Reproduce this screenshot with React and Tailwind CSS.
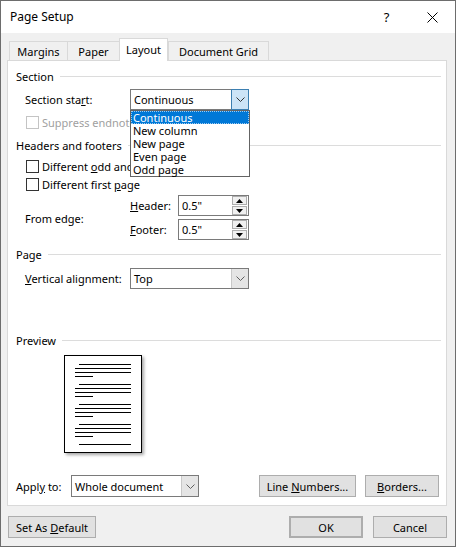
import React from 'react'

function Chevron({ color = '#606060' }) {
  return (
    <svg width="9" height="5" viewBox="0 0 9 5">
      <path d="M0.5 0.5 L4.5 4.5 L8.5 0.5" fill="none" stroke={color} strokeWidth="1" />
    </svg>
  )
}

function Combo({ value, className, open }) {
  return (
    <div className={`flex h-[21px] border border-[#7a7a7a] bg-white ${className}`}>
      <div className="flex-1 flex items-center pl-[3px] whitespace-nowrap">{value}</div>
      {open ? (
        <div className="w-[18px] flex items-center justify-center bg-[#cce4f7] border border-[#3c7fb1] -my-px -mr-px">
          <Chevron color="#333333" />
        </div>
      ) : (
        <div className="w-[17px] flex items-center justify-center bg-[#e5e5e5] border-l border-[#c8c8c8]">
          <Chevron />
        </div>
      )}
    </div>
  )
}

function Spin({ value }) {
  return (
    <div className="flex h-[21px] w-[71px] border border-[#7a7a7a] bg-white">
      <div className="flex-1 flex items-center pl-[3px]">{value}</div>
      <div className="w-[16px] flex flex-col justify-center gap-px pr-px">
        <div className="h-[9px] border border-[#adadad] bg-[#f0f0f0] flex items-center justify-center">
          <svg width="7" height="4" viewBox="0 0 7 4"><path d="M0 4 L3.5 0 L7 4Z" fill="#000" /></svg>
        </div>
        <div className="h-[9px] border border-[#adadad] bg-[#f0f0f0] flex items-center justify-center">
          <svg width="7" height="4" viewBox="0 0 7 4"><path d="M0 0 L3.5 4 L7 0Z" fill="#000" /></svg>
        </div>
      </div>
    </div>
  )
}

function Check({ children, disabled }) {
  return (
    <div className="flex items-center h-[13px] pl-[18px] gap-[3px] whitespace-nowrap">
      <div className={`w-[13px] h-[13px] shrink-0 bg-white border ${disabled ? 'border-[#c4c4c4]' : 'border-[#333333]'}`} />
      <span className={disabled ? 'text-[#a0a0a0]' : ''}>{children}</span>
    </div>
  )
}

function Group({ title, className = '' }) {
  return (
    <div className={`flex items-center h-[16px] pl-[8px] pr-[5px] ${className}`}>
      <span>{title}</span>
      <div className="flex-1 h-px bg-[#dcdcdc] ml-[6px]" />
    </div>
  )
}

function Button({ children, className = '' }) {
  return (
    <div className={`h-[22px] flex items-center justify-center bg-[#e1e1e1] border border-[#adadad] whitespace-nowrap ${className}`}>
      <span>{children}</span>
    </div>
  )
}

function PagePreview() {
  const lines = []
  for (let g = 0; g < 4; g++) {
    const y = 8 + g * 20
    lines.push([14, 66, y], [10, 66, y + 4], [10, 66, y + 8], [10, 28, y + 12])
  }
  lines.push([14, 66, 88])
  return (
    <div className="ml-[56px] w-[78px] h-[98px] border border-black bg-white shadow-[2px_2px_3px_rgba(0,0,0,0.35)]">
      <svg width="76" height="96" viewBox="0 0 76 96" shapeRendering="crispEdges">
        {lines.map(([x1, x2, y], i) => (
          <rect key={i} x={x1} y={y} width={x2 - x1} height="1" fill="#000" />
        ))}
      </svg>
    </div>
  )
}

const tabs = [
  { t: 'Margins', w: 'w-[58px]' },
  { t: 'Paper', w: 'w-[52px]' },
  { t: 'Layout', w: 'w-[49px]', on: true },
  { t: 'Document Grid', w: 'w-[101px]' },
]

export default function App() {
  return (
    <div className="w-[456px] h-[547px] border border-[#6d6d6d] bg-[#f0f0f0] flex flex-col overflow-hidden text-[11px] text-black font-['Noto_Sans','Open_Sans',sans-serif] leading-none">
      {/* title bar */}
      <div className="h-[32px] shrink-0 bg-white flex items-center pl-[9px]">
        <span className="text-[12px]">Page Setup</span>
        <div className="ml-auto w-[45px] h-full flex items-center justify-center text-[13px]">?</div>
        <div className="w-[46px] h-full flex items-center justify-center">
          <svg width="11" height="11" viewBox="0 0 11 11">
            <path d="M0.5 0.5 L10.5 10.5 M10.5 0.5 L0.5 10.5" stroke="#000" strokeWidth="1" />
          </svg>
        </div>
      </div>

      {/* tabs */}
      <div className="h-[28px] shrink-0 flex items-end px-[8px] relative z-10 -mb-px">
        {tabs.map((tab, i) => (
          <div
            key={tab.t}
            className={`${tab.w} flex items-center justify-center border-t border-l border-[#d9d9d9] ${
              tab.on ? 'h-[23px] bg-white border-r pb-[2px]' : 'h-[19px] mb-px'
            } ${i === tabs.length - 1 ? 'border-r' : ''}`}
          >
            {tab.t}
          </div>
        ))}
      </div>

      {/* panel */}
      <div className="ml-[6px] w-[440px] h-[446px] shrink-0 border border-[#d9d9d9] bg-white flex flex-col whitespace-nowrap">
        <Group title="Section" className="mt-[7px]" />

        <div className="relative z-20 mt-[5px] flex items-center h-[21px]">
          <span className="pl-[17px] w-[122px]">Section sta<u>r</u>t:</span>
          <Combo value="Continuous" className="w-[119px]" open />
          <div className="absolute left-[122px] top-[21px] w-[120px] border border-[#646464] bg-white flex flex-col">
            <div className="h-[13px] flex items-center pl-[2px] bg-[#0078d7] text-white outline outline-1 outline-dotted outline-[#9ecbf0] -outline-offset-1">Continuous</div>
            <div className="h-[13px] flex items-center pl-[2px]">New column</div>
            <div className="h-[13px] flex items-center pl-[2px]">New page</div>
            <div className="h-[13px] flex items-center pl-[2px]">Even page</div>
            <div className="h-[13px] flex items-center pl-[2px]">Odd page</div>
          </div>
        </div>

        <div className="mt-[6px]">
          <Check disabled>Suppress endnotes</Check>
        </div>

        <Group title="Headers and footers" className="mt-[8px]" />

        <div className="mt-[7px]">
          <Check>Different <u>o</u>dd and even</Check>
        </div>
        <div className="mt-[5px]">
          <Check>Different first <u>p</u>age</Check>
        </div>

        <div className="mt-[4px] flex items-center">
          <span className="pl-[17px] w-[122px] mt-[2px]">From edge:</span>
          <div className="flex flex-col gap-[3px]">
            <div className="flex items-center">
              <span className="w-[48px]"><u>H</u>eader:</span>
              <Spin value={'0.5"'} />
            </div>
            <div className="flex items-center">
              <span className="w-[48px]"><u>F</u>ooter:</span>
              <Spin value={'0.5"'} />
            </div>
          </div>
        </div>

        <Group title="Page" className="mt-[6px]" />

        <div className="mt-[6px] flex items-center h-[21px]">
          <span className="pl-[17px] w-[122px]"><u>V</u>ertical alignment:</span>
          <Combo value="Top" className="w-[119px]" />
        </div>

        <Group title="Preview" className="mt-[43px]" />

        <div className="mt-[7px]">
          <PagePreview />
        </div>

        <div className="mt-[22px] flex items-center h-[22px] pl-[8px] pr-[7px]">
          <span className="w-[55px]">Appl<u>y</u> to:</span>
          <Combo value="Whole document" className="w-[128px] h-[22px]" />
          <Button className="ml-auto w-[97px]">Line <u>N</u>umbers...</Button>
          <Button className="ml-[9px] w-[74px]"><u>B</u>orders...</Button>
        </div>
      </div>

      {/* bottom buttons */}
      <div className="mt-[10px] flex px-[7px] pr-[8px]">
        <Button className="w-[88px]">Set As <u>D</u>efault</Button>
        <Button className="ml-auto w-[74px] border-2 border-[#0078d7]">OK</Button>
        <Button className="ml-[10px] w-[74px]">Cancel</Button>
      </div>
    </div>
  )
}
